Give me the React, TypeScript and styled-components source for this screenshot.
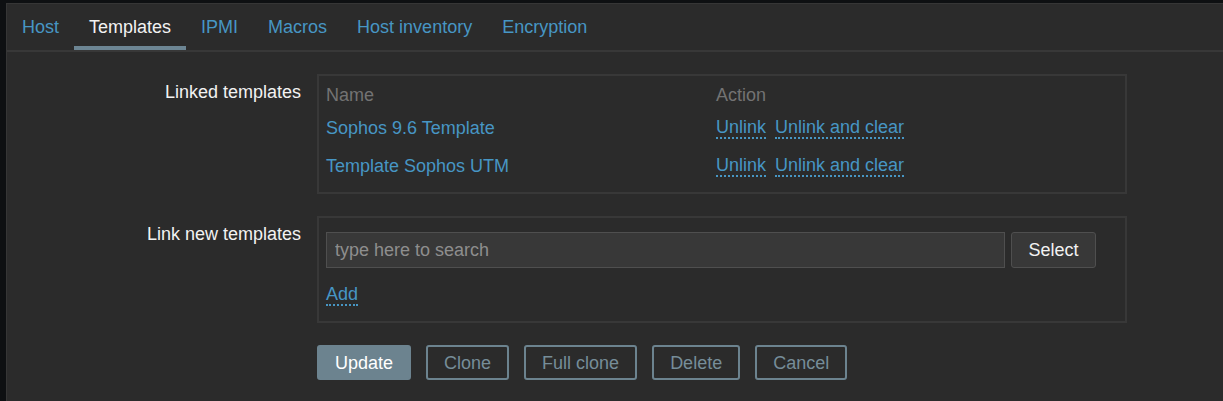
import React from "react";
import styled, { createGlobalStyle } from "styled-components";

const GlobalStyle = createGlobalStyle`
  html, body {
    margin: 0;
    padding: 0;
    background: #0e1012;
    overflow: hidden;
  }
  body {
    font-family: "Liberation Sans", Arial, sans-serif;
    font-size: 18px;
    line-height: 20px;
  }
`;

const Page = styled.div`
  padding: 3px 0 0 6px;
`;

const Panel = styled.div`
  width: 1217px;
  height: 398px;
  overflow: hidden;
  background: #2b2b2b;
  border: 1px solid #363636;
  border-right: none;
  border-bottom: none;
  box-sizing: border-box;
`;

const TabBar = styled.nav`
  display: flex;
  height: 46px;
  border-bottom: 2px solid #383838;
`;

const Tab = styled.a<{ $active?: boolean }>`
  display: flex;
  align-items: center;
  padding: 0 15px;
  color: ${(p) => (p.$active ? "#f2f2f2" : "#4796c4")};
  text-decoration: none;
  cursor: pointer;
  box-shadow: ${(p) => (p.$active ? "inset 0 -4px 0 #6c8593" : "none")};
`;

const Form = styled.div`
  display: grid;
  grid-template-columns: 294px 810px;
  column-gap: 16px;
  row-gap: 22px;
  padding-top: 22px;
`;

const Label = styled.div`
  text-align: right;
  padding-top: 8px;
  color: #f2f2f2;
`;

const Box = styled.div<{ $pad: string }>`
  border: 2px solid #383838;
  padding: ${(p) => p.$pad};
`;

const LinkedTable = styled.div`
  display: grid;
  grid-template-columns: 390px 1fr;
  grid-template-rows: 26px 38px 39px;
  align-items: center;
`;

const HeadCell = styled.div`
  color: #737373;
`;

const Cell = styled.div`
  display: flex;
  align-items: center;
  gap: 9px;
  padding-top: 1px;
`;

const NameLink = styled.a`
  color: #4796c4;
  text-decoration: none;
  cursor: pointer;
`;

const ActionLink = styled.a`
  color: #4796c4;
  text-decoration: none;
  border-bottom: 2px dotted #4796c4;
  cursor: pointer;
`;

const SearchRow = styled.div`
  display: flex;
  gap: 6px;
`;

const SearchInput = styled.input`
  width: 679px;
  height: 36px;
  box-sizing: border-box;
  background: #383838;
  border: 1px solid #4f4f4f;
  padding: 0 8px;
  color: #f2f2f2;
  font: inherit;
  outline: none;
  &::placeholder {
    color: #8e8e8e;
  }
`;

const SelectButton = styled.button`
  width: 85px;
  height: 36px;
  box-sizing: border-box;
  background: #383838;
  border: 1px solid #4f4f4f;
  border-radius: 3px;
  color: #f2f2f2;
  font: inherit;
`;

const AddRow = styled.div`
  margin-top: 16px;
  display: flex;
`;

const Actions = styled.div`
  grid-column: 2;
  display: flex;
  gap: 15px;
`;

const Button = styled.button<{ $primary?: boolean }>`
  height: 35px;
  padding: 0 16px;
  box-sizing: border-box;
  border: 2px solid #6c838f;
  border-radius: 3px;
  background: ${(p) => (p.$primary ? "#6c838f" : "transparent")};
  color: ${(p) => (p.$primary ? "#ffffff" : "#768d99")};
  font: inherit;
`;

const tabs = ["Host", "Templates", "IPMI", "Macros", "Host inventory", "Encryption"];

const linked = ["Sophos 9.6 Template", "Template Sophos UTM"];

export default function App() {
  return (
    <>
      <GlobalStyle />
      <Page>
        <Panel>
          <TabBar>
            {tabs.map((t) => (
              <Tab key={t} $active={t === "Templates"}>
                {t}
              </Tab>
            ))}
          </TabBar>

          <Form>
            <Label>Linked templates</Label>
            <Box $pad="6px 7px 7px">
              <LinkedTable>
                <HeadCell>Name</HeadCell>
                <HeadCell>Action</HeadCell>
                {linked.map((name) => (
                  <React.Fragment key={name}>
                    <Cell>
                      <NameLink>{name}</NameLink>
                    </Cell>
                    <Cell>
                      <ActionLink>Unlink</ActionLink>
                      <ActionLink>Unlink and clear</ActionLink>
                    </Cell>
                  </React.Fragment>
                ))}
              </LinkedTable>
            </Box>

            <Label>Link new templates</Label>
            <Box $pad="14px 7px 15px">
              <SearchRow>
                <SearchInput placeholder="type here to search" />
                <SelectButton>Select</SelectButton>
              </SearchRow>
              <AddRow>
                <ActionLink>Add</ActionLink>
              </AddRow>
            </Box>

            <Actions>
              <Button $primary>Update</Button>
              <Button>Clone</Button>
              <Button>Full clone</Button>
              <Button>Delete</Button>
              <Button>Cancel</Button>
            </Actions>
          </Form>
        </Panel>
      </Page>
    </>
  );
}
